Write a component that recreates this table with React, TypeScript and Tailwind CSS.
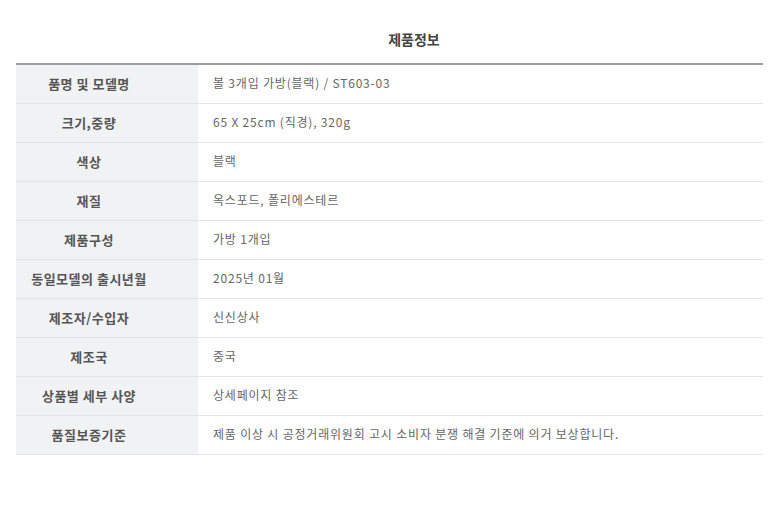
import React from "react";

const rows: [string, string][] = [
  ["품명 및 모델명", "볼 3개입 가방(블랙) / ST603-03"],
  ["크기,중량", "65 X 25cm (직경), 320g"],
  ["색상", "블랙"],
  ["재질", "옥스포드, 폴리에스테르"],
  ["제품구성", "가방 1개입"],
  ["동일모델의 출시년월", "2025년 01월"],
  ["제조자/수입자", "신신상사"],
  ["제조국", "중국"],
  ["상품별 세부 사양", "상세페이지 참조"],
  ["품질보증기준", "제품 이상 시 공정거래위원회 고시 소비자 분쟁 해결 기준에 의거 보상합니다."],
];

export default function App() {
  return (
    <div
      className="w-[780px] h-[516px] bg-white px-[16px] pt-[28px]"
      style={{ fontFamily: '"Noto Sans CJK KR", "Noto Sans", sans-serif' }}
    >
      <div className="h-[35px] pl-[48px] flex justify-center items-start">
        <span className="text-[14px] font-bold text-[#444] leading-[22px]">제품정보</span>
      </div>
      <div className="w-[747px] border-t-2 border-[#9a9ea3]">
        {rows.map(([k, v]) => (
          <div key={k} className="flex h-[39px] border-b border-[#e3e3e3]">
            <div className="w-[182px] bg-[#f1f2f4] flex items-center justify-center pr-[36px] text-[13px] font-bold text-[#555] tracking-[0.5px]">
              {k}
            </div>
            <div className="flex-1 flex items-center pl-[15px] text-[12px] text-[#666] tracking-[0.8px] pb-[2px]">{v}</div>
          </div>
        ))}
      </div>
    </div>
  );
}
